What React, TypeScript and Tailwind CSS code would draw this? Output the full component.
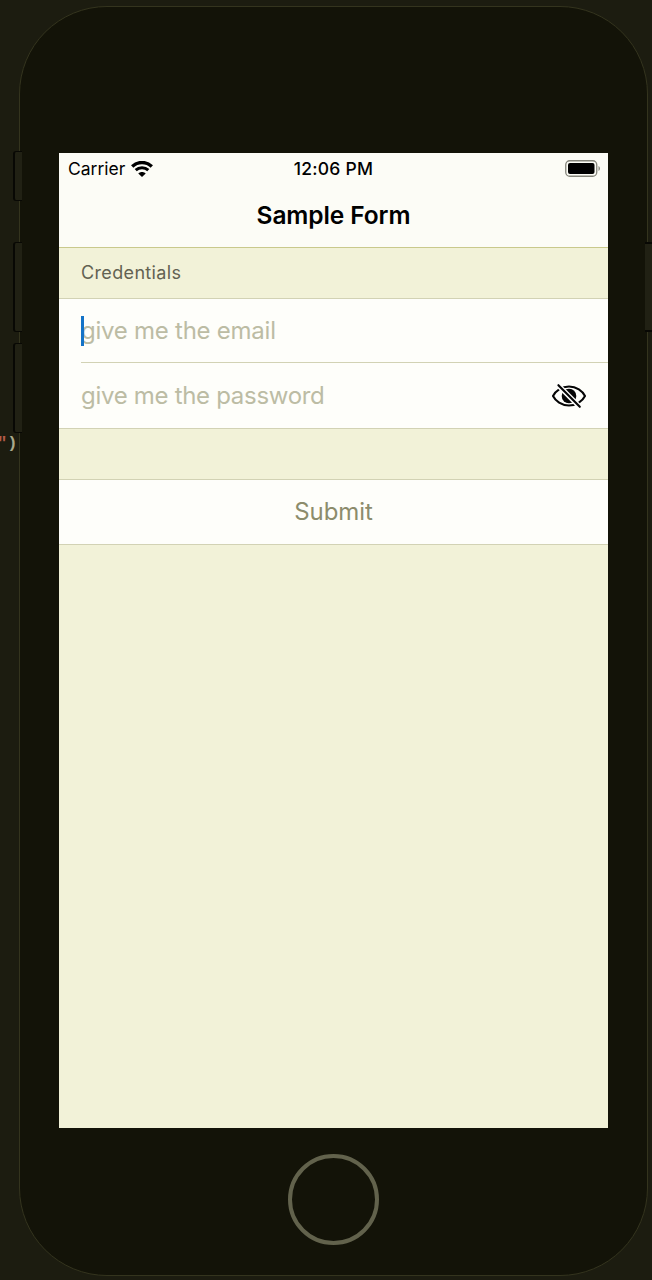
import React from "react";

function WifiIcon() {
  return (
    <svg width="22" height="16" viewBox="0 0 22 16" fill="none" aria-hidden="true">
      <path d="M1.2 5.4C6.7.2 15.3.2 20.8 5.4" stroke="#000" strokeWidth="3.4" />
      <path d="M4.7 9.1c3.5-3.3 9.1-3.3 12.6 0" stroke="#000" strokeWidth="3" />
      <path d="M7.3 12.4c2-2 5.400-2 7.400 0L11 16z" fill="#000" />
    </svg>
  );
}

function BatteryIcon() {
  return (
    <svg width="36" height="17" viewBox="0 0 36 17" fill="none" aria-hidden="true">
      <rect x="0.75" y="0.75" width="31" height="15.5" rx="4" stroke="#85857b" strokeWidth="1.3" />
      <rect x="3" y="3" width="26.5" height="11" rx="2" fill="#000" />
      <path d="M33.5 6v5c1.9-.7 1.9-4.3 0-5z" fill="#85857b" />
    </svg>
  );
}

function EyeSlashIcon() {
  return (
    <svg width="36" height="26" viewBox="0 0 36 26" fill="none" aria-hidden="true">
      <path d="M2 13C4.500 8 10.500 3.500 18 3.500S31.500 8 34 13c-2.500 5-8.500 9.500-16 9.500S4.500 18 2 13z" stroke="#050505" strokeWidth="2.100" strokeLinejoin="round" />
      <circle cx="18" cy="13" r="7.300" fill="#050505" />
      <path d="M6.200 1.200 29.600 24.800" stroke="#fdfdfb" strokeWidth="5" />
      <path d="M7.400 2.200 28.800 23.800" stroke="#050505" strokeWidth="2.100" strokeLinecap="round" />
    </svg>
  );
}

function StatusBar() {
  return (
    <div className="grid h-[31px] grid-cols-3 items-center pr-[7px] pl-[9px] text-[17.5px] leading-none text-black">
      <div className="flex items-center gap-[6px]">
        <span>Carrier</span>
        <WifiIcon />
      </div>
      <span className="-ml-[2px] text-center font-medium tracking-[0.25px] whitespace-nowrap">12:06 PM</span>
      <div className="flex justify-end pb-[1px]"><BatteryIcon /></div>
    </div>
  );
}

export default function App() {
  return (
    <main className="relative h-[1280px] w-[652px] overflow-hidden bg-[#1c1c10] pt-[6px] pl-[19px] font-['Inter','Liberation_Sans',sans-serif]">
      <div className="absolute top-[435px] left-[-3px] flex font-['Liberation_Mono',monospace] text-[17px] leading-none font-bold">
        <span className="text-[#b35b48]">"</span>
        <span className="text-[#aaa98b]">)</span>
      </div>
      <div className="flex h-[1270px] w-[629px] flex-col items-center rounded-[88px] border border-[#34341e] bg-[#131308] pt-[146px]">
        <section className="flex h-[975px] w-[549px] flex-col bg-[#f2f2d8]">
          <header className="h-[95px] border-b border-[#c9c98c] bg-[#fcfcf6]">
            <StatusBar />
            <h1 className="pt-[14px] text-center text-[24.5px] leading-[34px] font-semibold tracking-[-0.1px] text-black">Sample Form</h1>
          </header>
          <h2 className="h-[50px] pl-[22px] text-[18px] leading-[50px] tracking-[0.35px] text-[#626252]">Credentials</h2>
          <div className="border-y border-[#d2d2b4] bg-[#fefefa] text-[24px] tracking-[-0.25px] text-[#bcbca4]">
            <div className="flex h-[63px] items-center pl-[22px]">
              <div className="relative leading-[30px]">
                give me the email
                <span className="absolute top-0 left-0 h-[30px] w-[3px] bg-[#1473c7]" />
              </div>
            </div>
            <div className="ml-[22px] flex h-[66px] items-center justify-between border-t border-[#d2d2b4] pr-[21px]">
              <span className="tracking-[-0.3px]">give me the password</span>
              <EyeSlashIcon />
            </div>
          </div>
          <button className="mt-[50px] h-[66px] border-y border-[#d2d2b4] bg-[#fefefa] text-[24px] tracking-[-0.1px] text-[#8c8c6c]">Submit</button>
        </section>
        <div className="mt-[26px] size-[91px] rounded-full border-4 border-[#62624c]" />
      </div>
      <span className="absolute top-[151px] left-[13px] h-[50px] w-[9px] rounded-l-[3px] border-y border-l-2 border-[#080804] bg-[#212114]" />
      <span className="absolute top-[242px] left-[13px] h-[90px] w-[9px] rounded-l-[3px] border-y border-l-2 border-[#080804] bg-[#212114]" />
      <span className="absolute top-[343px] left-[13px] h-[90px] w-[9px] rounded-l-[3px] border-y border-l-2 border-[#080804] bg-[#212114]" />
      <span className="absolute top-[242px] left-[645px] h-[90px] w-[9px] border-y-2 border-[#080804] bg-[#212114]" />
    </main>
  );
}
